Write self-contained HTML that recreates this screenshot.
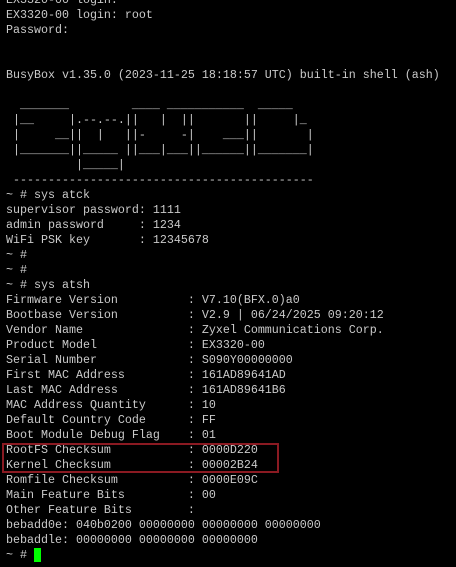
<!DOCTYPE html>
<html><head><meta charset="utf-8"><style>
html,body{margin:0;padding:0;background:#000;width:456px;height:567px;overflow:hidden}
pre{position:absolute;left:6px;top:-7px;margin:0;font-family:"Liberation Mono","DejaVu Sans Mono",monospace;font-size:11.67px;line-height:15px;color:#cacaca;white-space:pre}
.box{position:absolute;left:2px;top:443px;width:273px;height:26px;border:2px solid #8b1a22}
.cur{position:absolute;left:34px;top:548px;width:7px;height:14px;background:#00ff00}
</style></head><body>
<pre>EX3320-00 login:
EX3320-00 login: root
Password:


BusyBox v1.35.0 (2023-11-25 18:18:57 UTC) built-in shell (ash)

  _______         ____ ___________  _____
 |__     |.--.--.||   |  ||       ||     |_
 |     __||  |   ||-     -|    ___||       |
 |_______||_____ ||___|___||______||_______|
          |_____|
 -------------------------------------------
~ # sys atck
supervisor password: 1111
admin password     : 1234
WiFi PSK key       : 12345678
~ #
~ #
~ # sys atsh
Firmware Version          : V7.10(BFX.0)a0
Bootbase Version          : V2.9 | 06/24/2025 09:20:12
Vendor Name               : Zyxel Communications Corp.
Product Model             : EX3320-00
Serial Number             : S090Y00000000
First MAC Address         : 161AD89641AD
Last MAC Address          : 161AD89641B6
MAC Address Quantity      : 10
Default Country Code      : FF
Boot Module Debug Flag    : 01
RootFS Checksum           : 0000D220
Kernel Checksum           : 00002B24
Romfile Checksum          : 0000E09C
Main Feature Bits         : 00
Other Feature Bits        :
bebadd0e: 040b0200 00000000 00000000 00000000
bebaddle: 00000000 00000000 00000000
~ #</pre>
<div class="box"></div>
<div class="cur"></div>
</body></html>
